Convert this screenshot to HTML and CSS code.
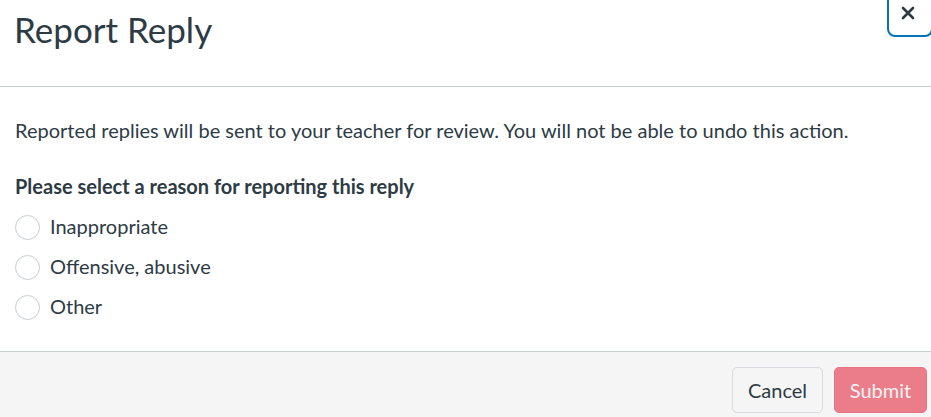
FILE: index.html
```html
<!DOCTYPE html>
<html lang="en">
<head>
<meta charset="utf-8">
<title>Report Reply</title>
<link rel="stylesheet" href="styles.css">
</head>
<body>
<div class="modal">
  <header class="modal-header">
    <h2 class="modal-title">Report Reply</h2>
    <button class="close-btn" type="button" aria-label="Close">
      <svg width="14" height="14" viewBox="0 0 14 14" aria-hidden="true">
        <path d="M2 2 L12 12 M12 2 L2 12" stroke="#2D3B45" stroke-width="2.6" stroke-linecap="round"/>
      </svg>
    </button>
  </header>
  <section class="modal-body">
    <p class="intro">Reported replies will be sent to your teacher for review. You will not be able to undo this action.</p>
    <fieldset class="reasons">
      <legend class="reasons-label">Please select a reason for reporting this reply</legend>
      <label class="radio"><input type="radio" name="reason"><span class="radio-facade"></span><span class="radio-text">Inappropriate</span></label>
      <label class="radio"><input type="radio" name="reason"><span class="radio-facade"></span><span class="radio-text">Offensive, abusive</span></label>
      <label class="radio"><input type="radio" name="reason"><span class="radio-facade"></span><span class="radio-text">Other</span></label>
    </fieldset>
  </section>
  <footer class="modal-footer">
    <button class="btn btn-secondary" type="button">Cancel</button>
    <button class="btn btn-danger" type="button" disabled>Submit</button>
  </footer>
</div>
</body>
</html>
```

FILE: styles.css
```css
* { box-sizing: border-box; }
html, body { margin: 0; padding: 0; background: #fff; }
body {
  font-family: Lato, "Liberation Sans", sans-serif;
  color: #2D3B45;
  overflow: hidden;
}
.modal {
  position: relative;
  width: 931px;
  height: 417px;
  display: flex;
  flex-direction: column;
}
.modal-header {
  position: relative;
  height: 87px;
  border-bottom: 1px solid #C7CDD1;
  padding: 8px 14px 0;
}
.modal-title {
  margin: 0;
  font-size: 35px;
  font-weight: 400;
  line-height: 1.2;
}
.close-btn {
  position: absolute;
  left: 887px;
  top: -12px;
  width: 46px;
  height: 49px;
  border: 2px solid #0374B5;
  border-radius: 8px;
  background: #fff;
  display: flex;
  align-items: flex-end;
  justify-content: center;
  padding: 0 0 15px 0;
  margin: 0;
}
.close-btn svg { display: block; margin-right: 4px; }
.modal-body {
  flex: 1;
  padding: 28px 15px 0;
}
.intro {
  margin: 0;
  font-size: 20px;
  line-height: 30px;
}
.reasons {
  border: 0;
  margin: 26px 0 0;
  padding: 0;
  display: flex;
  flex-direction: column;
  gap: 10px;
}
.reasons-label {
  padding: 0;
  font-size: 20px;
  font-weight: 700;
  line-height: 30px;
  margin-bottom: 10px;
}
.radio {
  display: flex;
  align-items: center;
  gap: 10px;
  font-size: 20px;
  line-height: 30px;
}
.radio input {
  position: absolute;
  opacity: 0;
  width: 1px;
  height: 1px;
  margin: 0;
}
.radio-facade {
  width: 25px;
  height: 25px;
  border: 1px solid #C7CDD1;
  border-radius: 50%;
  background: #fff;
  flex: none;
  margin-top: 2px;
}
.modal-footer {
  height: 66px;
  flex: none;
  background: #F5F5F5;
  border-top: 1px solid #C7CDD1;
  display: flex;
  justify-content: flex-end;
  align-items: flex-start;
  gap: 11px;
  padding: 15px 4px 0 0;
}
.btn {
  font-family: Lato, "Liberation Sans", sans-serif;
  font-size: 20px;
  height: 46px;
  padding: 0;
  border-radius: 5px;
  margin: 0;
}
.btn-secondary {
  width: 91px;
  background: #F5F5F5;
  border: 1px solid #D7DADE;
  color: #2D3B45;
}
.btn-danger {
  width: 93px;
  background: #EA7D89;
  border: 1px solid #E67582;
  color: #FCF2F3;
}
```
